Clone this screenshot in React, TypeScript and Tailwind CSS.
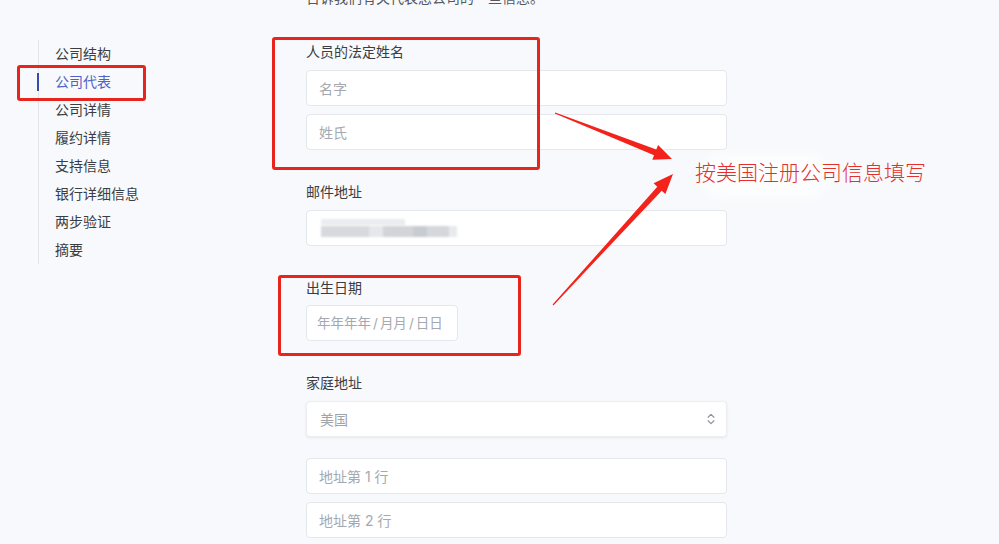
import { ChevronsUpDown } from "lucide-react";

const navItems = ["公司结构", "公司代表", "公司详情", "履约详情", "支持信息", "银行详细信息", "两步验证", "摘要"];

function TextField({ placeholder }: { placeholder: string }) {
  return (
    <input
      readOnly
      placeholder={placeholder}
      className="h-[36px] w-full rounded-[4px] border border-[#e4e7eb] bg-white px-[12px] text-[14px] outline-none placeholder:text-[#a4a9b1]"
    />
  );
}

function Label({ children }: { children: string }) {
  return <div className="mb-[8px] text-[14px] leading-5 text-[#3a3d42]">{children}</div>;
}

export default function App() {
  return (
    <div className="relative flex h-[544px] w-[999px] overflow-hidden bg-[#f7f9fc] font-[Inter,'Noto_Sans_CJK_SC',sans-serif]">
      {/* sidebar */}
      <div className="w-[306px] shrink-0 pt-[40px]">
        <nav className="ml-[38px] flex flex-col border-l border-[#e2e5ea]">
          {navItems.map((item, i) => (
            <div
              key={item}
              className={
                i === 1
                  ? "relative h-[28px] pl-[16px] text-[14px] leading-[28px] text-[#5062c4] before:absolute before:top-[5px] before:-left-[2px] before:h-[18px] before:w-[2px] before:bg-[#3a4aa8]"
                  : "h-[28px] pl-[16px] text-[14px] leading-[28px] text-[#3a3d42]"
              }
            >
              {item}
            </div>
          ))}
        </nav>
      </div>

      {/* form */}
      <div className="flex w-[421px] flex-col">
        <div className="-mt-[12px] h-5 text-[14px] leading-5 text-[#55585e]">告诉我们有关代表您公司的一些信息。</div>

        <div className="mt-[34px]">
          <Label>人员的法定姓名</Label>
          <div className="flex flex-col gap-[8px]">
            <TextField placeholder="名字" />
            <TextField placeholder="姓氏" />
          </div>
        </div>

        <div className="mt-[32px]">
          <Label>邮件地址</Label>
          <div className="relative h-[36px] w-full rounded-[4px] border border-[#e4e7eb] bg-white">
            <div className="flex h-full flex-col justify-center gap-[1px] pl-[14px] blur-[1px]">
              <div className="h-[6px] w-[84px] bg-[#ebecef]" />
              <div className="flex h-[11px]">
                <div className="w-[48px] bg-[#d8d9dd]" />
                <div className="w-[14px] bg-[#e6e7ea]" />
                <div className="w-[30px] bg-[#d3d4d9]" />
                <div className="w-[14px] bg-[#c9cbd2]" />
                <div className="w-[22px] bg-[#d6d7dc]" />
                <div className="w-[8px] bg-[#e9eaed]" />
              </div>
            </div>
          </div>
        </div>

        <div className="mt-[32px]">
          <Label>出生日期</Label>
          <div className="-mt-[1px] flex h-[36px] w-[152px] items-center rounded-[4px] border border-[#e4e7eb] bg-white pl-[10px] text-[13.5px] text-[#a4a9b1]">
            年年年年<span className="px-[2px]">/</span>月月<span className="px-[2px]">/</span>日日
          </div>
        </div>

        <div className="mt-[32px]">
          <Label>家庭地址</Label>
          <div className="flex h-[36px] w-full items-center justify-between rounded-[4px] border border-[#eceef1] bg-white pr-[8px] pl-[13px] text-[14px] text-[#9ea3ab] shadow-[0_1px_3px_rgba(0,0,0,0.08)]">
            美国
            <ChevronsUpDown size={14} strokeWidth={2} className="text-[#8d9299]" />
          </div>
          <div className="mt-[21px] flex flex-col gap-[8px]">
            <TextField placeholder="地址第 1 行" />
            <TextField placeholder="地址第 2 行" />
          </div>
        </div>
      </div>

      {/* annotations */}
      <div className="absolute top-[65px] left-[17px] h-[36px] w-[129px] rounded-[3px] border-[3px] border-[#e8251d]" />
      <div className="absolute top-[37px] left-[272px] h-[133px] w-[268px] rounded-[3px] border-[3px] border-[#e8251d]" />
      <div className="absolute top-[275px] left-[278px] h-[81px] w-[243px] rounded-[3px] border-[3px] border-[#e8251d]" />

      <div className="absolute top-[154px] left-[700px] h-[44px] w-[130px] rounded-full bg-white/70 blur-[6px]" />
      <div className="absolute top-[159px] left-[695px] text-[21px] font-light leading-7 text-[#e3302a]">按美国注册公司信息填写</div>

      <svg className="pointer-events-none absolute top-0 left-0" width="999" height="544" viewBox="0 0 999 544">
        <polygon
          points="555.2,112.5 656.3,149.6 658.1,145 672,159 652.3,159.8 654.1,155.2 554.8,113.5"
          fill="#f3221a"
        />
        <polygon
          points="553.4,305.4 661.7,190.7 665.4,194.1 673,174 653.6,183.3 657.3,186.7 552.6,304.6"
          fill="#f3221a"
        />
      </svg>
    </div>
  );
}
